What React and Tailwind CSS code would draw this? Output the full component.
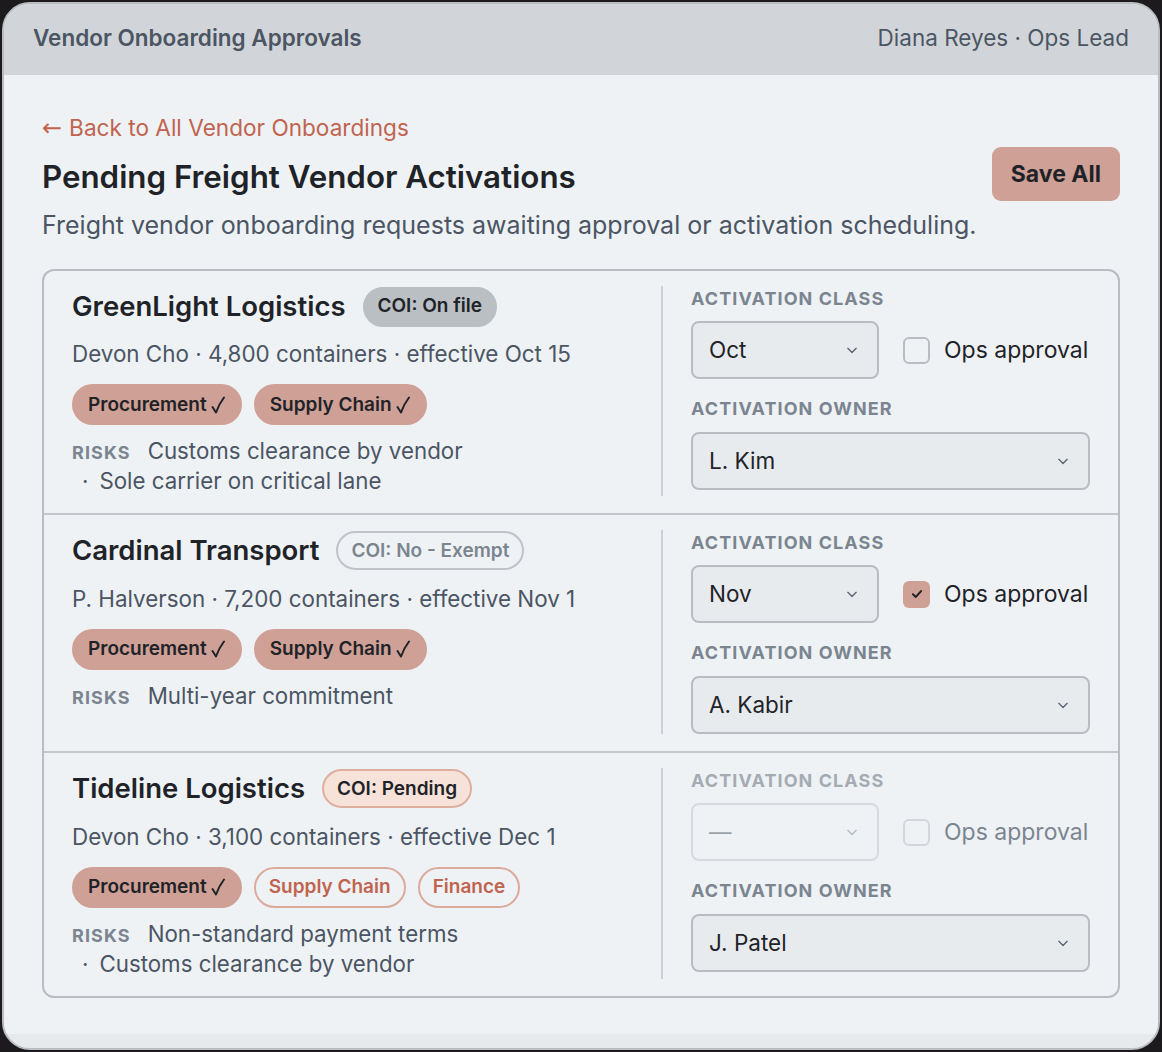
import React from "react";

const vendors = [
  {
    name: "GreenLight Logistics",
    coi: { label: "COI: On file", tone: "filed" },
    meta: "Devon Cho · 4,800 containers · effective Oct 15",
    approvals: [
      { label: "Procurement", done: true },
      { label: "Supply Chain", done: true },
    ],
    risks: ["Customs clearance by vendor", "Sole carrier on critical lane"],
    activationClass: "Oct",
    opsApproved: false,
    classDisabled: false,
    owner: "L. Kim",
  },
  {
    name: "Cardinal Transport",
    coi: { label: "COI: No - Exempt", tone: "exempt" },
    meta: "P. Halverson · 7,200 containers · effective Nov 1",
    approvals: [
      { label: "Procurement", done: true },
      { label: "Supply Chain", done: true },
    ],
    risks: ["Multi-year commitment"],
    activationClass: "Nov",
    opsApproved: true,
    classDisabled: false,
    owner: "A. Kabir",
  },
  {
    name: "Tideline Logistics",
    coi: { label: "COI: Pending", tone: "pending" },
    meta: "Devon Cho · 3,100 containers · effective Dec 1",
    approvals: [
      { label: "Procurement", done: true },
      { label: "Supply Chain", done: false },
      { label: "Finance", done: false },
    ],
    risks: ["Non-standard payment terms", "Customs clearance by vendor"],
    activationClass: "—",
    opsApproved: false,
    classDisabled: true,
    owner: "J. Patel",
  },
];

const symbolFont = { fontFamily: "'DejaVu Sans', sans-serif" };

function CoiBadge({ label, tone }) {
  if (tone === "filed") {
    return (
      <span className="inline-flex h-[40px] items-center rounded-full border-2 border-[#babfc3] bg-[#babfc3] px-[13px] text-[19px] font-semibold text-[#1f2328]">
        {label}
      </span>
    );
  }
  if (tone === "pending") {
    return (
      <span className="inline-flex h-[39px] items-center rounded-full border-2 border-[#deae9f] bg-[#f6e2d9] px-[13px] text-[19px] font-semibold text-[#1f2328]">
        {label}
      </span>
    );
  }
  return (
    <span className="inline-flex h-[39px] items-center rounded-full border-2 border-[#bfc3c7] px-[13px] text-[19px] font-semibold text-[#7b8590]">
      {label}
    </span>
  );
}

// Tall tick shown after a completed approval
function Tick() {
  return (
    <svg width="16" height="20" viewBox="0 0 16 20" fill="none" stroke="#1f2328" strokeWidth="2" strokeLinecap="round" strokeLinejoin="round">
      <path d="M2.5 12 L6 17.5 Q9 9 14 2.5" />
    </svg>
  );
}

function ApprovalPill({ label, done }) {
  if (done) {
    return (
      <span className="inline-flex h-[41px] items-center rounded-full border-2 border-[#cfa096] bg-[#cfa096] px-[14px] text-[19px] font-semibold text-[#1f2328]">
        {label}
        <span className="ml-[3px] flex items-center">
          <Tick />
        </span>
      </span>
    );
  }
  return (
    <span className="inline-flex h-[41px] items-center rounded-full border-2 border-[#dcaa9c] px-[13px] text-[19px] font-semibold text-[#c0644f]">
      {label}
    </span>
  );
}

function Chevron({ light }) {
  return (
    <svg
      width="20"
      height="20"
      viewBox="0 0 24 24"
      fill="none"
      stroke={light ? "#b3b9bf" : "#5b6470"}
      strokeWidth="1.6"
      strokeLinecap="round"
      strokeLinejoin="round"
    >
      <path d="m7 10 5 5 5-5" />
    </svg>
  );
}

function SelectBox({ value, disabled, wide }) {
  return (
    <div
      className={
        (wide ? "w-full " : "w-[188px] ") +
        (disabled
          ? "border-[#d6dade] bg-[#eef2f5] text-[#9aa1a8] "
          : "border-[#b9bdc1] bg-[#e7ebee] text-[#1f2328] ") +
        "flex h-[58px] items-center justify-between rounded-[8px] border-2 pl-[16px] pr-[15px] text-[22.5px]"
      }
    >
      <span>{value}</span>
      <Chevron light={disabled} />
    </div>
  );
}

function Checkbox({ checked, disabled }) {
  if (checked) {
    return (
      <span className="flex h-[27px] w-[27px] items-center justify-center rounded-[6px] bg-[#cfa096]">
        <svg width="14" height="14" viewBox="0 0 24 24" fill="none" stroke="#1f2328" strokeWidth="3.5" strokeLinecap="round" strokeLinejoin="round">
          <path d="M5 12.5 10 17 19 7" />
        </svg>
      </span>
    );
  }
  return (
    <span
      className={
        (disabled ? "border-[#d3d7db] " : "border-[#b9bdc1] ") +
        "h-[27px] w-[27px] rounded-[6px] border-2 bg-[#eef2f5]"
      }
    />
  );
}

function VendorRow({ v, last }) {
  return (
    <div className={(last ? "" : "border-b-2 border-[#c3c7cb] ") + "flex items-stretch px-[28px] pt-[15px] pb-[17px]"}>
      <div className="flex-1 pr-[20px]">
        <div className="flex items-center gap-[17px]">
          <h2 className="text-[27.5px] font-semibold text-[#1f2328]">{v.name}</h2>
          <CoiBadge {...v.coi} />
        </div>
        <div className="mt-[13px] text-[22.4px] leading-[28px] text-[#4b5563]">{v.meta}</div>
        <div className="mt-[16px] flex gap-[12px]">
          {v.approvals.map((a) => (
            <ApprovalPill key={a.label} {...a} />
          ))}
        </div>
        <div className="mt-[11px] text-[22.3px] leading-[30px] text-[#4b5563]">
          <div className="flex h-[30px] items-baseline gap-[17px]">
            <span className="text-[18px] font-bold tracking-[0.06em] text-[#7b8590]">RISKS</span>
            <span>{v.risks[0]}</span>
          </div>
          {v.risks.slice(1).map((r) => (
            <div key={r} className="flex h-[30px] items-baseline gap-[11px] pl-[10px]">
              <span>·</span>
              <span>{r}</span>
            </div>
          ))}
        </div>
      </div>
      <div className="w-[429px] border-l-2 border-[#cdd1d5] pt-[3px] pl-[28px]">
        <div
          className={
            (v.classDisabled ? "text-[#a5abb2] " : "text-[#7b8590] ") +
            "text-[18px] font-bold leading-[20px] tracking-[0.06em]"
          }
        >
          ACTIVATION CLASS
        </div>
        <div className="mt-[12px] flex items-center">
          <SelectBox value={v.activationClass} disabled={v.classDisabled} />
          <div className="ml-[24px] flex items-center gap-[14px]">
            <Checkbox checked={v.opsApproved} disabled={v.classDisabled} />
            <span className={(v.classDisabled ? "text-[#7b8590] " : "text-[#1f2328] ") + "text-[23px]"}>
              Ops approval
            </span>
          </div>
        </div>
        <div className="mt-[20px] text-[18px] font-bold leading-[20px] tracking-[0.06em] text-[#7b8590]">
          ACTIVATION OWNER
        </div>
        <div className="mt-[13px]">
          <SelectBox value={v.owner} wide />
        </div>
      </div>
    </div>
  );
}

export default function App() {
  return (
    <div
      className="min-h-screen bg-[#1c1a1d] p-[2px]"
      style={{ fontFamily: "Inter, 'Noto Sans', 'Liberation Sans', sans-serif" }}
    >
      <div className="flex h-[1048px] flex-col overflow-hidden rounded-[28px] border-2 border-[#b9bdc1] bg-[#e6eaed]">
        <header className="flex h-[71px] shrink-0 items-center justify-between bg-[#d1d5d9] px-[29px] pb-[3px] text-[22.5px]">
          <span className="font-semibold text-[#4b5563]">Vendor Onboarding Approvals</span>
          <span className="text-[#4b5563]">Diana Reyes · Ops Lead</span>
        </header>
        <main className="bg-[#eef2f5] px-[38px] pt-[39px] pb-[36px]">
          <a className="flex items-center text-[22.6px] leading-[28px] text-[#c0644f]">
            <span className="mr-[7px] text-[24px]" style={symbolFont}>←</span>
            Back to All Vendor Onboardings
          </a>
          <div className="mt-[5px] flex items-center justify-between">
            <h1 className="mt-[6px] text-[31.3px] font-semibold text-[#1f2328]">Pending Freight Vendor Activations</h1>
            <button className="h-[54px] rounded-[9px] bg-[#cfa096] px-[19px] text-[23px] font-bold text-[#1f2328]">
              Save All
            </button>
          </div>
          <p className="mt-[9px] text-[25px] leading-[30px] text-[#4b5563]">
            Freight vendor onboarding requests awaiting approval or activation scheduling.
          </p>
          <div className="mt-[29px] rounded-[12px] border-2 border-[#b9bdc1]">
            {vendors.map((v, i) => (
              <VendorRow key={v.name} v={v} last={i === vendors.length - 1} />
            ))}
          </div>
        </main>
      </div>
    </div>
  );
}
